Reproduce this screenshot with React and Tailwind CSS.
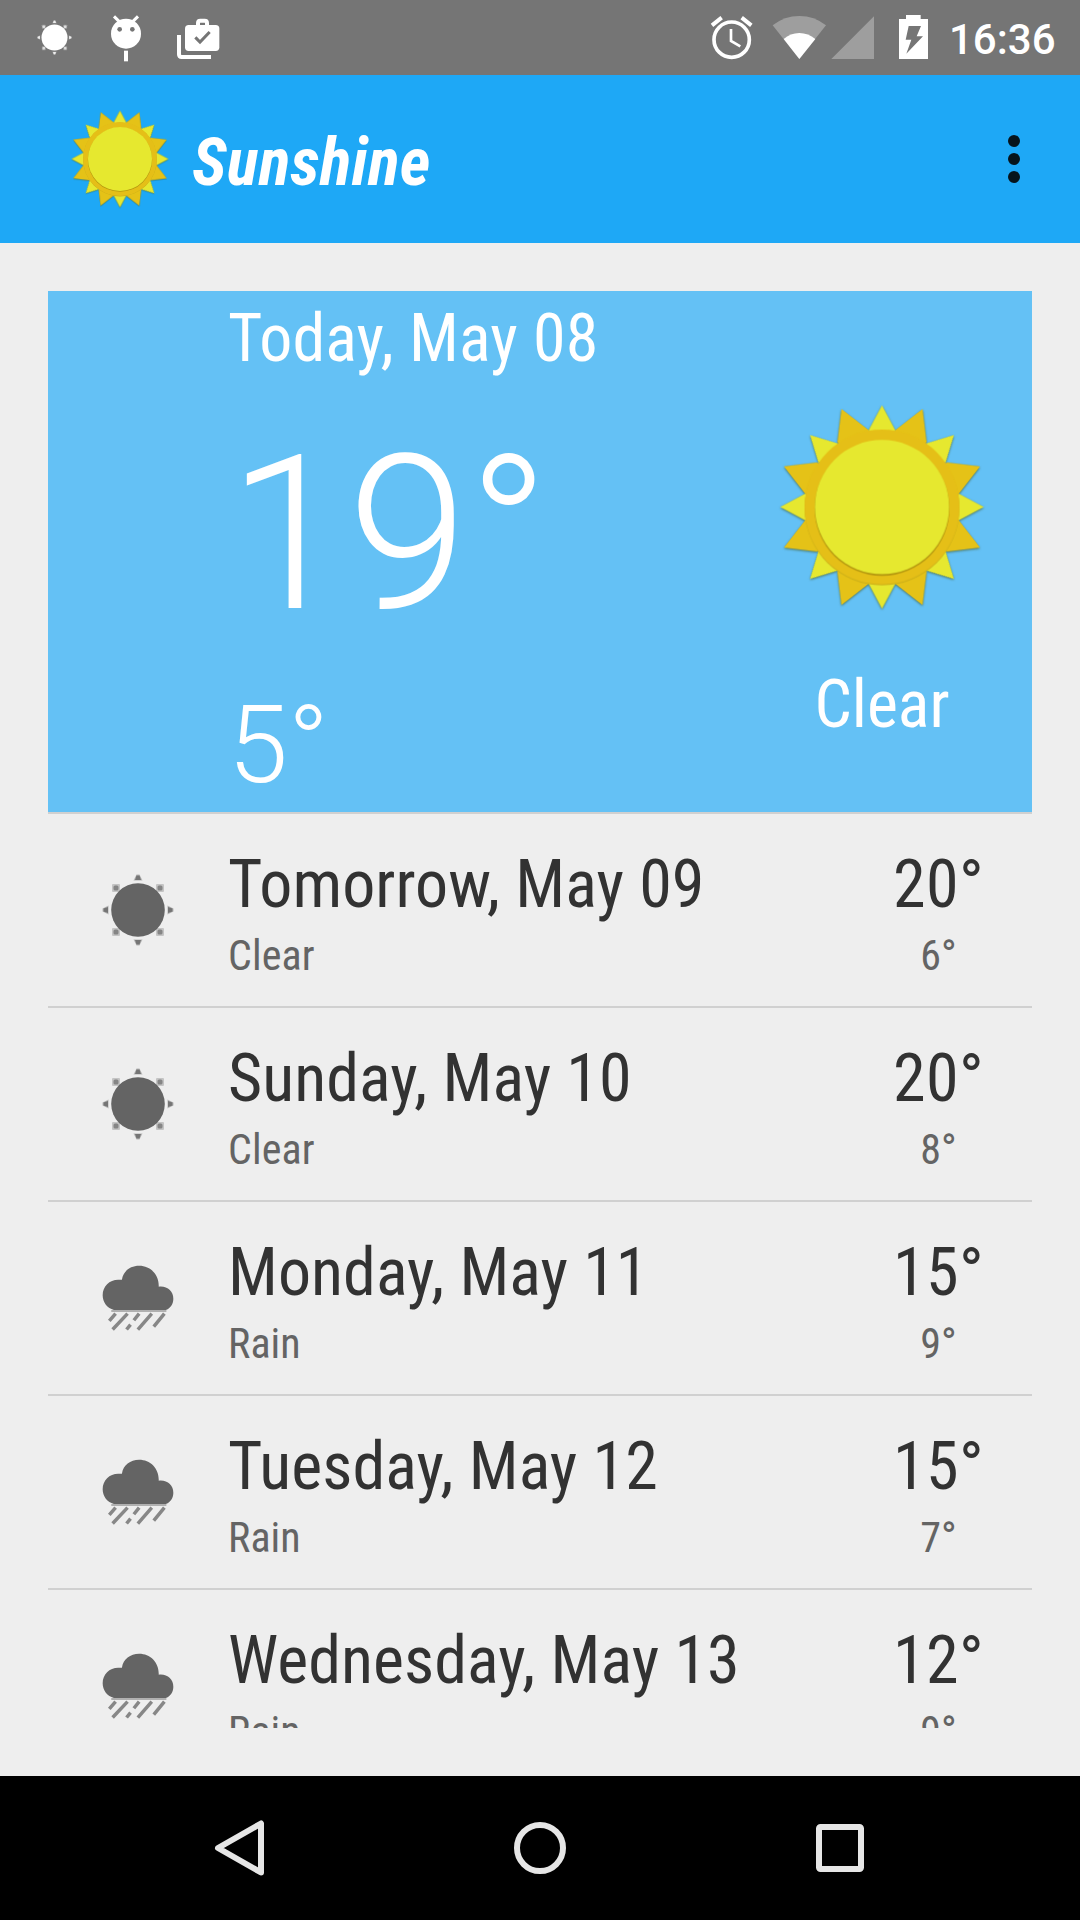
const condensed = "[font-family:'Roboto_Condensed',Roboto,sans-serif] [font-stretch:75%]";

const days = [
  { day: "Tomorrow, May 09", sky: "Clear", high: "20°", low: "6°" },
  { day: "Sunday, May 10", sky: "Clear", high: "20°", low: "8°" },
  { day: "Monday, May 11", sky: "Rain", high: "15°", low: "9°" },
  { day: "Tuesday, May 12", sky: "Rain", high: "15°", low: "7°" },
  { day: "Wednesday, May 13", sky: "Rain", high: "12°", low: "9°" },
];

const quarters = [0, 90, 180, 270];
const eighths = [0, 45, 90, 135, 180, 225, 270, 315];

function PaperSun({ className }) {
  return (
    <svg viewBox="-328 -328 656 656" className={className}>
      <g className="drop-shadow-[0_3px_3px_rgba(60,70,0,0.6)]">
        {eighths.map((a) => (
          <path key={a} d="M0-306L41-229L0-200L-41-229Z" fill="#e6e82f" transform={`rotate(${a})`} />
        ))}
        {quarters.map((a) => (
          <path
            key={a}
            d="M39-230L122-295L134-196L100-150L20-180ZM-39-230L-122-295L-134-196L-100-150L-20-180Z"
            fill="#e5c217"
            transform={`rotate(${a})`}
          />
        ))}
      </g>
      <circle r="233" cy="3" fill="#c9ae1b" />
      <circle r="233" fill="#e5bf17" />
      <circle r="203" cy="4" fill="#b3960f" />
      <circle r="202" fill="#e6e82f" />
    </svg>
  );
}

function ClearIcon({ className }) {
  return (
    <svg viewBox="-36 -36 72 72" className={className} fill="currentColor">
      <circle r="26.800" />
      {quarters.map((a) => (
        <g key={a} transform={`rotate(${a})`}>
          <path d="M-1.500-35.500h3L4.500-29.500h-9Z" opacity="0.4" />
          <path d="M-1.500-34.500h3L3-30h-6Z" opacity="0.8" />
          <rect x="-26" y="-26" width="8" height="8" rx="1" opacity="0.3" />
          <rect x="-24.500" y="-24.500" width="5" height="5" rx="1.500" opacity="0.65" />
        </g>
      ))}
    </svg>
  );
}

function RainIcon({ className }) {
  return (
    <svg viewBox="186 134 217 201" className={className}>
      <path
        fill="#646464"
        d="M222 269C202 265 188 246 188 225C188 198 208 178 235 178H246C250 152 271 136 298 136C331 136 357 161 357 196V199C383 196 401 213 401 235C401 252 391 265 378 269Z"
      />
      <path d="M214 272H380" stroke="#646464" strokeOpacity="0.45" strokeWidth="6" />
      <path
        d="M227 280L208 302M263 280L218 328M298 280L282 300M272 313L260 328M336 280L294 328M374 280L342 319"
        stroke="#646464"
        strokeOpacity="0.75"
        strokeWidth="10.500"
      />
    </svg>
  );
}

function StatusBar() {
  return (
    <div className="flex h-[75px] bg-[#757575] pl-9 text-white">
      <div className="flex h-[75px] w-9 items-center justify-center">
        <ClearIcon className="size-[35px]" />
      </div>
      <svg viewBox="324 0 108 225" className="ml-9 h-[75px] w-9">
        <circle cx="378" cy="101" r="45" fill="#fff" />
        <path d="M342 49L358 65M414 49L398 65" stroke="#fff" strokeWidth="9" />
        <path d="M378 152V184" stroke="#fff" strokeWidth="12" />
        <circle cx="359" cy="88" r="7" fill="#757575" />
        <circle cx="397" cy="88" r="7" fill="#757575" />
      </svg>
      <svg viewBox="522 0 144 225" className="ml-[30px] h-[75px] w-12">
        <rect x="555" y="75" width="103" height="78" rx="11" fill="#fff" />
        <path d="M594 78V69Q594 62 601 62H614Q621 62 621 69V78" fill="none" stroke="#fff" strokeWidth="12" />
        <path d="M537 105V163Q537 171 545 171H633" fill="none" stroke="#fff" strokeWidth="12" />
        <path d="M586 112L600 126L629 96" fill="none" stroke="#757575" strokeWidth="9" />
      </svg>
      <div className="flex-1" />
      <svg viewBox="60 0 132 225" className="h-[75px] w-11" fill="none" stroke="#fff">
        <circle cx="125" cy="119" r="53" strokeWidth="11" />
        <path d="M123 87V123L151 139" strokeWidth="8" />
        <path d="M66 76L95 53M184 76L155 53" strokeWidth="12" />
      </svg>
      <svg viewBox="246 0 165 225" className="ml-[18px] h-[75px] w-[55px]">
        <path d="M328 177L248 76Q283 48 328 48T408 76Z" fill="#9e9e9e" />
        <path d="M328 177L281 117Q301 99 328 99T376 117Z" fill="#fff" />
      </svg>
      <svg viewBox="423 0 132 225" className="ml-1 h-[75px] w-11">
        <path d="M424 177H552V49Z" fill="#9e9e9e" />
      </svg>
      <svg viewBox="624 0 93 225" className="ml-[23px] h-[75px] w-[31px]">
        <path d="M627 57H648V45H692V57H714V177H627Z" fill="#fff" />
        <path d="M656 78H693L680 109H699L649 161L664 119H647Z" fill="#757575" />
      </svg>
      <div className="ml-5 w-[131px] pt-px font-[Roboto] text-[42px] leading-[78px] font-medium">16:36</div>
    </div>
  );
}

function AppBar() {
  return (
    <header className="flex h-[168px] items-center bg-[#1ea8f6] pl-[68px] text-white">
      <PaperSun className="size-[104px]" />
      <h1 className={`ml-5 pt-[7px] text-[66px] leading-[80px] font-bold tracking-[0.3px] italic ${condensed}`}>
        Sunshine
      </h1>
      <svg viewBox="0 0 12 48" className="mr-[60px] ml-auto h-12 w-3" fill="#06141c">
        <circle cx="6" cy="6" r="6" />
        <circle cx="6" cy="24" r="6" />
        <circle cx="6" cy="42" r="6" />
      </svg>
    </header>
  );
}

function TodayCard() {
  return (
    <section className="flex h-[521px] bg-[#64c1f5] pl-[180px] text-white">
      <div className="flex-1">
        <div className={`pt-[9px] text-[66px] leading-[78px] tracking-[0.1px] ${condensed}`}>Today, May 08</div>
        <div className="mt-[31px] font-[Roboto] text-[216px] leading-[252px] font-light">19°</div>
        <div className="mt-[21px] font-[Roboto] text-[108px] leading-[126px] font-light">5°</div>
      </div>
      <div className="flex w-[300px] flex-col items-center pt-[107px]">
        <PaperSun className="size-[218px]" />
        <div className={`mt-[49px] text-[66px] leading-[80px] ${condensed}`}>Clear</div>
      </div>
    </section>
  );
}

function DayRow({ day, sky, high, low }) {
  return (
    <li className="flex h-[194px] border-t-2 border-[#d0d0d0] pr-12 pl-[54px]">
      <div className="flex h-48 w-[72px] items-center">
        {sky === "Clear" ? (
          <ClearIcon className="size-[72px] text-[#646464]" />
        ) : (
          <RainIcon className="h-[67px] w-[72px]" />
        )}
      </div>
      <div className={`ml-[54px] flex-1 pt-8 ${condensed}`}>
        <div className="text-[66px] leading-[78px] tracking-[0.05px] text-[#323232]">{day}</div>
        <div className="text-[42px] leading-[64px] tracking-[0.1px] text-[#646464]">{sky}</div>
      </div>
      <div className={`pt-8 text-center ${condensed}`}>
        <div className="text-[66px] leading-[78px] tracking-[0.4px] text-[#323232]">{high}</div>
        <div className="text-[42px] leading-[64px] text-[#646464]">{low}</div>
      </div>
    </li>
  );
}

function NavBar() {
  return (
    <nav className="flex h-36 items-center justify-between bg-black px-[210px]">
      <svg viewBox="0 0 60 60" className="size-[60px]" fill="none" stroke="#e6e6e6" strokeWidth="6" strokeLinejoin="round">
        <path d="M51 5.500V54.500L8 30Z" />
      </svg>
      <svg viewBox="0 0 60 60" className="size-[60px]" fill="none" stroke="#e6e6e6" strokeWidth="6">
        <circle cx="30" cy="30" r="23" />
      </svg>
      <svg viewBox="0 0 60 60" className="size-[60px]" fill="none" stroke="#e6e6e6" strokeWidth="6">
        <rect x="9" y="9" width="42" height="42" rx="1.500" />
      </svg>
    </nav>
  );
}

export default function App() {
  return (
    <div className="flex h-[1920px] w-[1080px] flex-col overflow-hidden bg-[#eeeeee]">
      <StatusBar />
      <AppBar />
      <main className="mx-12 my-12 h-[1437px] overflow-hidden">
        <TodayCard />
        <ul>
          {days.map((d) => (
            <DayRow key={d.day} {...d} />
          ))}
        </ul>
      </main>
      <NavBar />
    </div>
  );
}
